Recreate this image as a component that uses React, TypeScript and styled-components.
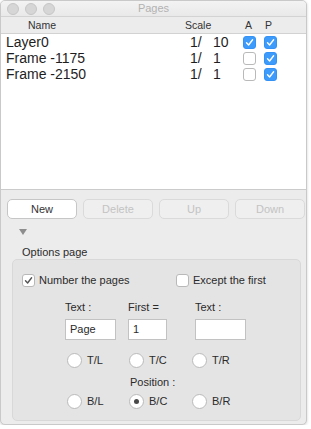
import React from 'react';
import styled, { createGlobalStyle } from 'styled-components';

const GlobalStyle = createGlobalStyle`
  html, body {
    margin: 0;
    padding: 0;
    background: #fff;
  }
  * {
    box-sizing: border-box;
  }
`;

const Window = styled.div`
  width: 307px;
  height: 425px;
  display: flex;
  flex-direction: column;
  background: #ececec;
  border: 1px solid #c9c9c9;
  border-radius: 5px;
  box-shadow: 0 1px 3px rgba(0, 0, 0, 0.18);
  overflow: hidden;
  font-family: "Liberation Sans", Arial, sans-serif;
  color: #2b2b2b;
`;

const TitleBar = styled.div`
  height: 16px;
  display: grid;
  grid-template-columns: 1fr auto 1fr;
  align-items: center;
  background: linear-gradient(#f3f3f3, #e9e9e9);
  border-bottom: 1px solid #d3d3d3;
`;

const Lights = styled.div`
  display: flex;
  gap: 6px;
  padding-left: 6px;
`;

const Light = styled.span`
  width: 12px;
  height: 12px;
  border-radius: 50%;
  background: #d6d6d6;
  border: 1px solid #c6c6c6;
`;

const Title = styled.div`
  font-size: 11px;
  line-height: 15px;
  color: #b2b2b2;
`;

const ListHead = styled.div`
  display: grid;
  grid-template-columns: 179px 58px 21px 21px;
  padding-left: 5px;
  height: 17px;
  align-items: center;
  border-bottom: 1px solid #d2d2d2;
  font-size: 10.5px;
  color: #333;
`;

const HeadCell = styled.span<{ $pad?: number }>`
  padding-left: ${(p) => p.$pad ?? 0}px;
`;

const ListBody = styled.div`
  height: 156px;
  background: #fff;
  border-bottom: 1px solid #cbcbcb;
`;

const Row = styled.div`
  display: grid;
  grid-template-columns: 179px 58px 21px 21px;
  padding-left: 5px;
  height: 16px;
  align-items: center;
  font-size: 14px;
  line-height: 16px;
  color: #1e1e1e;
`;

const Scale = styled.span`
  display: flex;
  padding-left: 5px;
`;

const ScaleOne = styled.span`
  width: 23px;
`;

const Check = styled.span<{ $on: boolean; $blue?: boolean }>`
  width: 13px;
  height: 13px;
  border-radius: 3px;
  display: inline-flex;
  align-items: center;
  justify-content: center;
  background: ${(p) => (p.$on && p.$blue ? '#3c9bfb' : '#fff')};
  border: 1px solid ${(p) => (p.$on && p.$blue ? '#3492f5' : '#b9b9b9')};
`;

const Buttons = styled.div`
  display: flex;
  gap: 6px;
  padding: 9px 0 0 6px;
`;

const Button = styled.button<{ $disabled?: boolean }>`
  width: 70px;
  height: 20px;
  padding: 0;
  border-radius: 5px;
  font-family: "Liberation Sans", Arial, sans-serif;
  font-size: 11px;
  background: ${(p) => (p.$disabled ? '#efefef' : '#fff')};
  border: 1px solid ${(p) => (p.$disabled ? '#dadada' : '#c6c6c6')};
  color: ${(p) => (p.$disabled ? '#c3c3c3' : '#333')};
`;

const Disclosure = styled.span`
  width: 0;
  height: 0;
  margin: 10px 0 0 18px;
  border-left: 4px solid transparent;
  border-right: 4px solid transparent;
  border-top: 6px solid #8d8d8d;
`;

const SectionTitle = styled.div`
  font-size: 11px;
  line-height: 13px;
  margin: 11px 0 0 21px;
`;

const Group = styled.div`
  margin: 0 5px 0 11px;
  height: 162px;
  background: #e4e4e4;
  border: 1px solid #d8d8d8;
  border-radius: 5px;
  padding: 13px 0 0 9px;
  font-size: 11px;
  line-height: 13px;
`;

const CheckLine = styled.div`
  display: flex;
  align-items: center;
  height: 14px;
`;

const CheckItem = styled.label<{ $width?: number }>`
  display: flex;
  align-items: center;
  gap: 4px;
  width: ${(p) => (p.$width ? `${p.$width}px` : 'auto')};
`;

const Fields = styled.div`
  display: grid;
  grid-template-columns: 63px 67px 51px;
  row-gap: 5px;
  margin: 14px 0 0 43px;
`;

const Input = styled.div<{ $width: number }>`
  width: ${(p) => p.$width}px;
  height: 21px;
  background: #fff;
  border: 1px solid #c2c2c2;
  padding-left: 4px;
  display: flex;
  align-items: center;
  font-size: 11px;
`;

const Radios = styled.div`
  display: grid;
  grid-template-columns: 62px 63px auto;
  margin: 13px 0 0 45px;
`;

const RadioItem = styled.label`
  display: flex;
  align-items: center;
  gap: 5px;
  height: 15px;
`;

const Radio = styled.span<{ $on?: boolean }>`
  width: 15px;
  height: 15px;
  border-radius: 50%;
  background: #fff;
  border: 1px solid #bababa;
  display: inline-flex;
  align-items: center;
  justify-content: center;
  &::after {
    content: '';
    display: ${(p) => (p.$on ? 'block' : 'none')};
    width: 5px;
    height: 5px;
    border-radius: 50%;
    background: #4a4a4a;
  }
`;

const PositionLabel = styled.div`
  grid-column: 2 / 4;
  padding-left: 1px;
  margin: 8px 0 5px;
`;

const Tick = ({ color }: { color: string }) => (
  <svg width="9" height="9" viewBox="0 0 9 9">
    <path d="M1.5 4.8 L3.6 7 L7.6 1.8" fill="none" stroke={color} strokeWidth="1.4" strokeLinecap="round" strokeLinejoin="round" />
  </svg>
);

const Box = ({ on, blue }: { on: boolean; blue?: boolean }) => (
  <Check $on={on} $blue={blue}>
    {on && <Tick color={blue ? '#fff' : '#555'} />}
  </Check>
);

const pages = [
  { name: 'Layer0', scale: '10', a: true, p: true },
  { name: 'Frame -1175', scale: '1', a: false, p: true },
  { name: 'Frame -2150', scale: '1', a: false, p: true },
];

const App: React.FC = () => {
  return (
    <>
      <GlobalStyle />
      <Window>
        <TitleBar>
          <Lights>
            <Light />
            <Light />
            <Light />
          </Lights>
          <Title>Pages</Title>
          <span />
        </TitleBar>

        <ListHead>
          <HeadCell $pad={22}>Name</HeadCell>
          <HeadCell>Scale</HeadCell>
          <HeadCell $pad={2}>A</HeadCell>
          <HeadCell $pad={1}>P</HeadCell>
        </ListHead>
        <ListBody>
          {pages.map((pg) => (
            <Row key={pg.name}>
              <span>{pg.name}</span>
              <Scale>
                <ScaleOne>1/</ScaleOne>
                <span>{pg.scale}</span>
              </Scale>
              <Box on={pg.a} blue />
              <Box on={pg.p} blue />
            </Row>
          ))}
        </ListBody>

        <Buttons>
          <Button>New</Button>
          <Button $disabled>Delete</Button>
          <Button $disabled>Up</Button>
          <Button $disabled>Down</Button>
        </Buttons>

        <Disclosure />
        <SectionTitle>Options page</SectionTitle>

        <Group>
          <CheckLine>
            <CheckItem $width={154}>
              <Box on />
              <span>Number the pages</span>
            </CheckItem>
            <CheckItem>
              <Box on={false} />
              <span>Except the first</span>
            </CheckItem>
          </CheckLine>

          <Fields>
            <span>Text :</span>
            <span>First =</span>
            <span>Text :</span>
            <Input $width={51}>Page</Input>
            <Input $width={39}>1</Input>
            <Input $width={51} />
          </Fields>

          <Radios>
            <RadioItem><Radio />T/L</RadioItem>
            <RadioItem><Radio />T/C</RadioItem>
            <RadioItem><Radio />T/R</RadioItem>
            <PositionLabel>Position :</PositionLabel>
            <RadioItem><Radio />B/L</RadioItem>
            <RadioItem><Radio $on />B/C</RadioItem>
            <RadioItem><Radio />B/R</RadioItem>
          </Radios>
        </Group>
      </Window>
    </>
  );
};

export default App;
